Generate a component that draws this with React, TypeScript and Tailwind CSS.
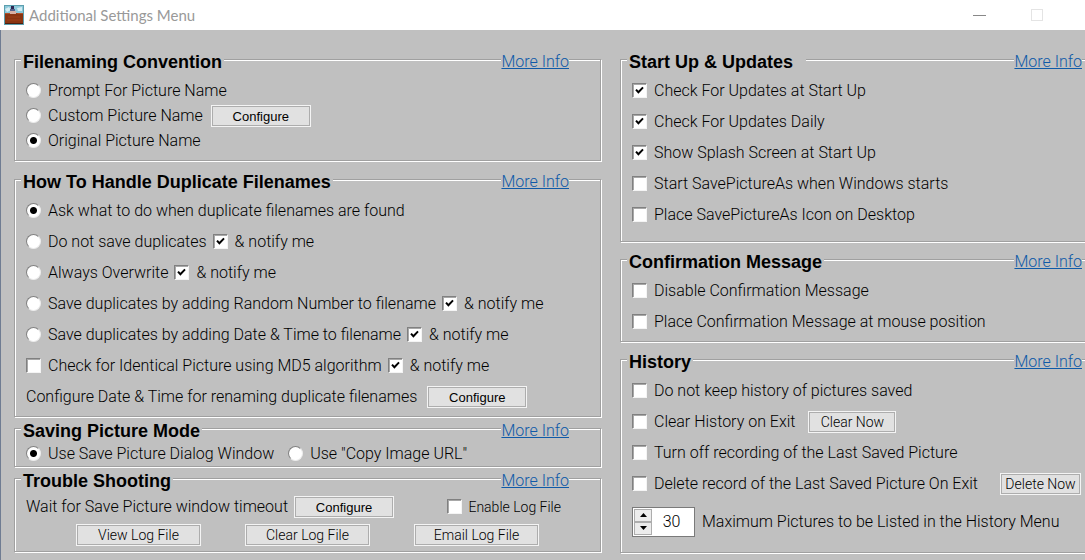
import { useState } from 'react';
import type { ReactNode } from 'react';

interface OptionProps {
  label: string;
  defaultChecked?: boolean;
  small?: boolean;
}

function CheckOption({ label, defaultChecked = false, small = false }: OptionProps) {
  return (
    <label className={`flex items-center whitespace-nowrap ${small ? 'gap-[6px] text-[14px]' : 'gap-[7px]'}`}>
      <span className="relative h-[15px] w-[15px] shrink-0">
        <input
          type="checkbox"
          defaultChecked={defaultChecked}
          className="peer block h-[15px] w-[15px] appearance-none border border-t-[#808080] border-l-[#808080] border-r-[#f4f4f4] border-b-[#f4f4f4] bg-white shadow-[inset_1px_1px_0_#a8a8a8]"
        />
        <svg
          viewBox="0 0 15 15"
          className="pointer-events-none absolute inset-0 hidden h-[15px] w-[15px] peer-checked:block"
          fill="none"
          stroke="#000"
          strokeWidth="2"
        >
          <path d="M4 6.6 L6.4 9.2 L11 4.4" />
        </svg>
      </span>
      {label}
    </label>
  );
}

function RadioOption({ label, name, defaultChecked = false }: OptionProps & { name: string }) {
  return (
    <label className="flex items-center gap-[7px] whitespace-nowrap">
      <input
        type="radio"
        name={name}
        defaultChecked={defaultChecked}
        className="h-[15px] w-[15px] shrink-0 appearance-none rounded-full border border-t-[#808080] border-l-[#808080] border-r-[#ececec] border-b-[#ececec] bg-white checked:bg-[radial-gradient(circle,#000_3px,#fff_4px)]"
      />
      {label}
    </label>
  );
}

function Button({ children, className = 'w-[100px]' }: { children: ReactNode; className?: string }) {
  return (
    <button
      type="button"
      className={`h-[22px] shrink-0 border border-[#f4f4f4] bg-[#e1e1e1] text-[14px] leading-[20px] whitespace-nowrap shadow-[inset_0_0_0_1px_#adadad] ${className}`}
    >
      {children}
    </button>
  );
}

function ConfigureButton() {
  return (
    <Button>
      <span className="font-['Liberation_Sans',sans-serif] text-[13px] font-normal">Configure</span>
    </Button>
  );
}

interface GroupProps {
  title: string;
  children: ReactNode;
  className?: string;
  titleClass?: string;
  linkClass?: string;
}

// Etched group box, the caption and link sit on the top line
function Group({ title, children, className = '', titleClass = 'pr-[2px]', linkClass = 'mr-[31px]' }: GroupProps) {
  return (
    <section
      className={`border border-[#a0a0a0] shadow-[inset_1px_1px_0_#fff,1px_1px_0_#fff] ${className}`}
    >
      <header className="-mt-[8px] flex h-[20px] items-center justify-between">
        <h2
          className={`ml-[6px] bg-[#c0c0c0] pl-[2px] font-['Liberation_Sans',sans-serif] text-[18px] leading-[20px] font-bold whitespace-nowrap ${titleClass}`}
        >
          {title}
        </h2>
        <a href="#" className={`bg-[#c0c0c0] leading-[20px] whitespace-nowrap text-[#0f5aa8] underline ${linkClass}`}>
          More Info
        </a>
      </header>
      {children}
    </section>
  );
}

function Row({ children, className = 'h-[31px]' }: { children: ReactNode; className?: string }) {
  return <div className={`flex items-center ${className}`}>{children}</div>;
}

const duplicateOptions = [
  { label: 'Do not save duplicates' },
  { label: 'Always Overwrite' },
  { label: 'Save duplicates by adding Random Number to filename' },
  { label: 'Save duplicates by adding Date & Time to filename' },
];

function AppIcon() {
  return (
    <svg width="20" height="20" viewBox="0 0 20 20">
      <rect width="20" height="20" fill="#5c9fae" />
      <rect x="1" y="1" width="18" height="8" fill="#8cc8da" />
      <path d="M1 4 L5 2 L7 5 L3 7 Z M13 3 L18 2 L18 6 L14 6 Z" fill="#d3ecf2" />
      <rect x="1" y="8" width="18" height="11" fill="#8a3512" />
      <path d="M1 8 H6 L8 9 H12 L14 8 H19 V9 H1 Z" fill="#b0522a" />
      <path d="M4 12 H16 M3 15 H17" stroke="#9c4018" />
      <rect x="7" y="1" width="3" height="3" fill="#2c2450" />
      <rect x="6" y="4" width="5" height="2" fill="#56618a" />
      <rect x="6" y="6" width="6" height="3" fill="#d8b0a4" />
      <rect x="1" y="18" width="18" height="1" fill="#4d1f10" />
    </svg>
  );
}

export default function App() {
  const [maxPictures, setMaxPictures] = useState(30);

  return (
    <div className="flex min-h-screen flex-col overflow-x-hidden bg-[#c0c0c0] font-[Roboto,sans-serif] text-[16px] leading-[20px] font-light text-black">
      {/* Title bar */}
      <header className="flex h-[30px] items-center bg-white pr-[42px] pl-[4px]">
        <AppIcon />
        <h1 className="ml-[5px] font-[Lato,sans-serif] text-[15px] font-normal text-[#999999]">
          Additional Settings Menu
        </h1>
        <div className="ml-auto flex items-center gap-[45px]">
          <button type="button" aria-label="Minimize" className="flex h-[13px] w-[13px] items-center">
            <span className="h-px w-full bg-[#888888]" />
          </button>
          <button type="button" aria-label="Maximize" className="h-[12px] w-[12px] border border-[#e4e4e4]" />
        </div>
      </header>

      <main className="grid flex-1 grid-cols-[587fr_465fr] items-start gap-[19px] border-l border-[#6f7c92] pt-[29px] pl-[13px]">
        <div className="flex min-w-0 flex-col">
          <Group title="Filenaming Convention" className="pb-[7px]">
            <div className="mt-[6px] pl-[11px]">
              <Row className="h-[25px]">
                <RadioOption name="naming" label="Prompt For Picture Name" />
              </Row>
              <Row className="h-[25px] gap-[8px]">
                <RadioOption name="naming" label="Custom Picture Name" />
                <ConfigureButton />
              </Row>
              <Row className="h-[25px]">
                <RadioOption name="naming" label="Original Picture Name" defaultChecked />
              </Row>
            </div>
          </Group>

          <Group title="How To Handle Duplicate Filenames" className="mt-[18px] pb-[4px]">
            <div className="mt-[3px] pl-[11px]">
              <Row>
                <RadioOption name="duplicates" label="Ask what to do when duplicate filenames are found" defaultChecked />
              </Row>
              {duplicateOptions.map((option) => (
                <Row key={option.label} className="h-[31px] gap-[6px]">
                  <RadioOption name="duplicates" label={option.label} />
                  <CheckOption label="& notify me" defaultChecked />
                </Row>
              ))}
              <Row className="h-[31px] gap-[6px]">
                <CheckOption label="Check for Identical Picture using MD5 algorithm" />
                <CheckOption label="& notify me" defaultChecked />
              </Row>
              <Row className="h-[31px] gap-[10px]">
                <span className="whitespace-nowrap">Configure Date &amp; Time for renaming duplicate filenames</span>
                <ConfigureButton />
              </Row>
            </div>
          </Group>

          <Group title="Saving Picture Mode" className="mt-[11px]">
            <div className="pl-[11px]">
              <Row className="h-[25px] gap-[14px]">
                <RadioOption name="mode" label="Use Save Picture Dialog Window" defaultChecked />
                <RadioOption name="mode" label={'Use "Copy Image URL"'} />
              </Row>
            </div>
          </Group>

          <Group title="Trouble Shooting" className="mt-[11px] pb-[5px]">
            <div className="mt-[3px] pl-[11px]">
              <Row className="h-[25px] justify-between pr-[39px]">
                <div className="flex items-center gap-[6px]">
                  <span className="whitespace-nowrap">Wait for Save Picture window timeout</span>
                  <ConfigureButton />
                </div>
                <CheckOption label="Enable Log File" small />
              </Row>
              <Row className="mt-[5px] h-[22px] gap-[44px] pl-[50px]">
                <Button className="w-[125px]">View Log File</Button>
                <Button className="w-[125px]">Clear Log File</Button>
                <Button className="w-[125px]">Email Log File</Button>
              </Row>
            </div>
          </Group>
        </div>

        <div className="flex min-w-0 flex-col">
          <Group title="Start Up & Updates" className="border-r-0 pb-[11px]" titleClass="pr-[13px]" linkClass="mr-[3px]">
            <div className="mt-[3px] pl-[11px]">
              <Row><CheckOption label="Check For Updates at Start Up" defaultChecked /></Row>
              <Row><CheckOption label="Check For Updates Daily" defaultChecked /></Row>
              <Row><CheckOption label="Show Splash Screen at Start Up" defaultChecked /></Row>
              <Row><CheckOption label="Start SavePictureAs when Windows starts" /></Row>
              <Row><CheckOption label="Place SavePictureAs Icon on Desktop" /></Row>
            </div>
          </Group>

          <Group title="Confirmation Message" className="mt-[17px] border-r-0 pb-[4px]" linkClass="mr-[3px]">
            <div className="mt-[3px] pl-[11px]">
              <Row><CheckOption label="Disable Confirmation Message" /></Row>
              <Row><CheckOption label="Place Confirmation Message at mouse position" /></Row>
            </div>
          </Group>

          <Group title="History" className="mt-[17px] border-r-0 pb-[15px]" linkClass="mr-[3px]">
            <div className="mt-[3px] pl-[11px]">
              <Row><CheckOption label="Do not keep history of pictures saved" /></Row>
              <Row className="h-[31px] gap-[13px]">
                <CheckOption label="Clear History on Exit" />
                <Button className="w-[88px]">Clear Now</Button>
              </Row>
              <Row><CheckOption label="Turn off recording of the Last Saved Picture" /></Row>
              <Row className="h-[31px] justify-between pr-[4px]">
                <CheckOption label="Delete record of the Last Saved Picture On Exit" />
                <Button className="w-[81px]">Delete Now</Button>
              </Row>
              <Row className="mt-[7px] h-[31px] gap-[7px]">
                <div className="flex h-[30px] w-[63px] border border-[#7a7a7a] bg-white p-px">
                  <div className="flex w-[18px] shrink-0 flex-col">
                    <button
                      type="button"
                      aria-label="Increase"
                      onClick={() => setMaxPictures(maxPictures + 1)}
                      className="flex flex-1 items-center justify-center border border-[#adadad] bg-[#ececec]"
                    >
                      <svg width="7" height="4" viewBox="0 0 7 4"><path d="M0 4 L3.5 0 L7 4 Z" /></svg>
                    </button>
                    <button
                      type="button"
                      aria-label="Decrease"
                      onClick={() => setMaxPictures(maxPictures - 1)}
                      className="flex flex-1 items-center justify-center border border-[#adadad] bg-[#ececec]"
                    >
                      <svg width="7" height="4" viewBox="0 0 7 4"><path d="M0 0 L3.5 4 L7 0 Z" /></svg>
                    </button>
                  </div>
                  <input
                    id="max-pictures"
                    type="text"
                    value={maxPictures}
                    onChange={(e) => setMaxPictures(Number(e.target.value) || 0)}
                    className="w-full min-w-0 pr-[2px] text-center outline-none"
                  />
                </div>
                <label htmlFor="max-pictures" className="whitespace-nowrap">
                  Maximum Pictures to be Listed in the History Menu
                </label>
              </Row>
            </div>
          </Group>
        </div>
      </main>
    </div>
  );
}
